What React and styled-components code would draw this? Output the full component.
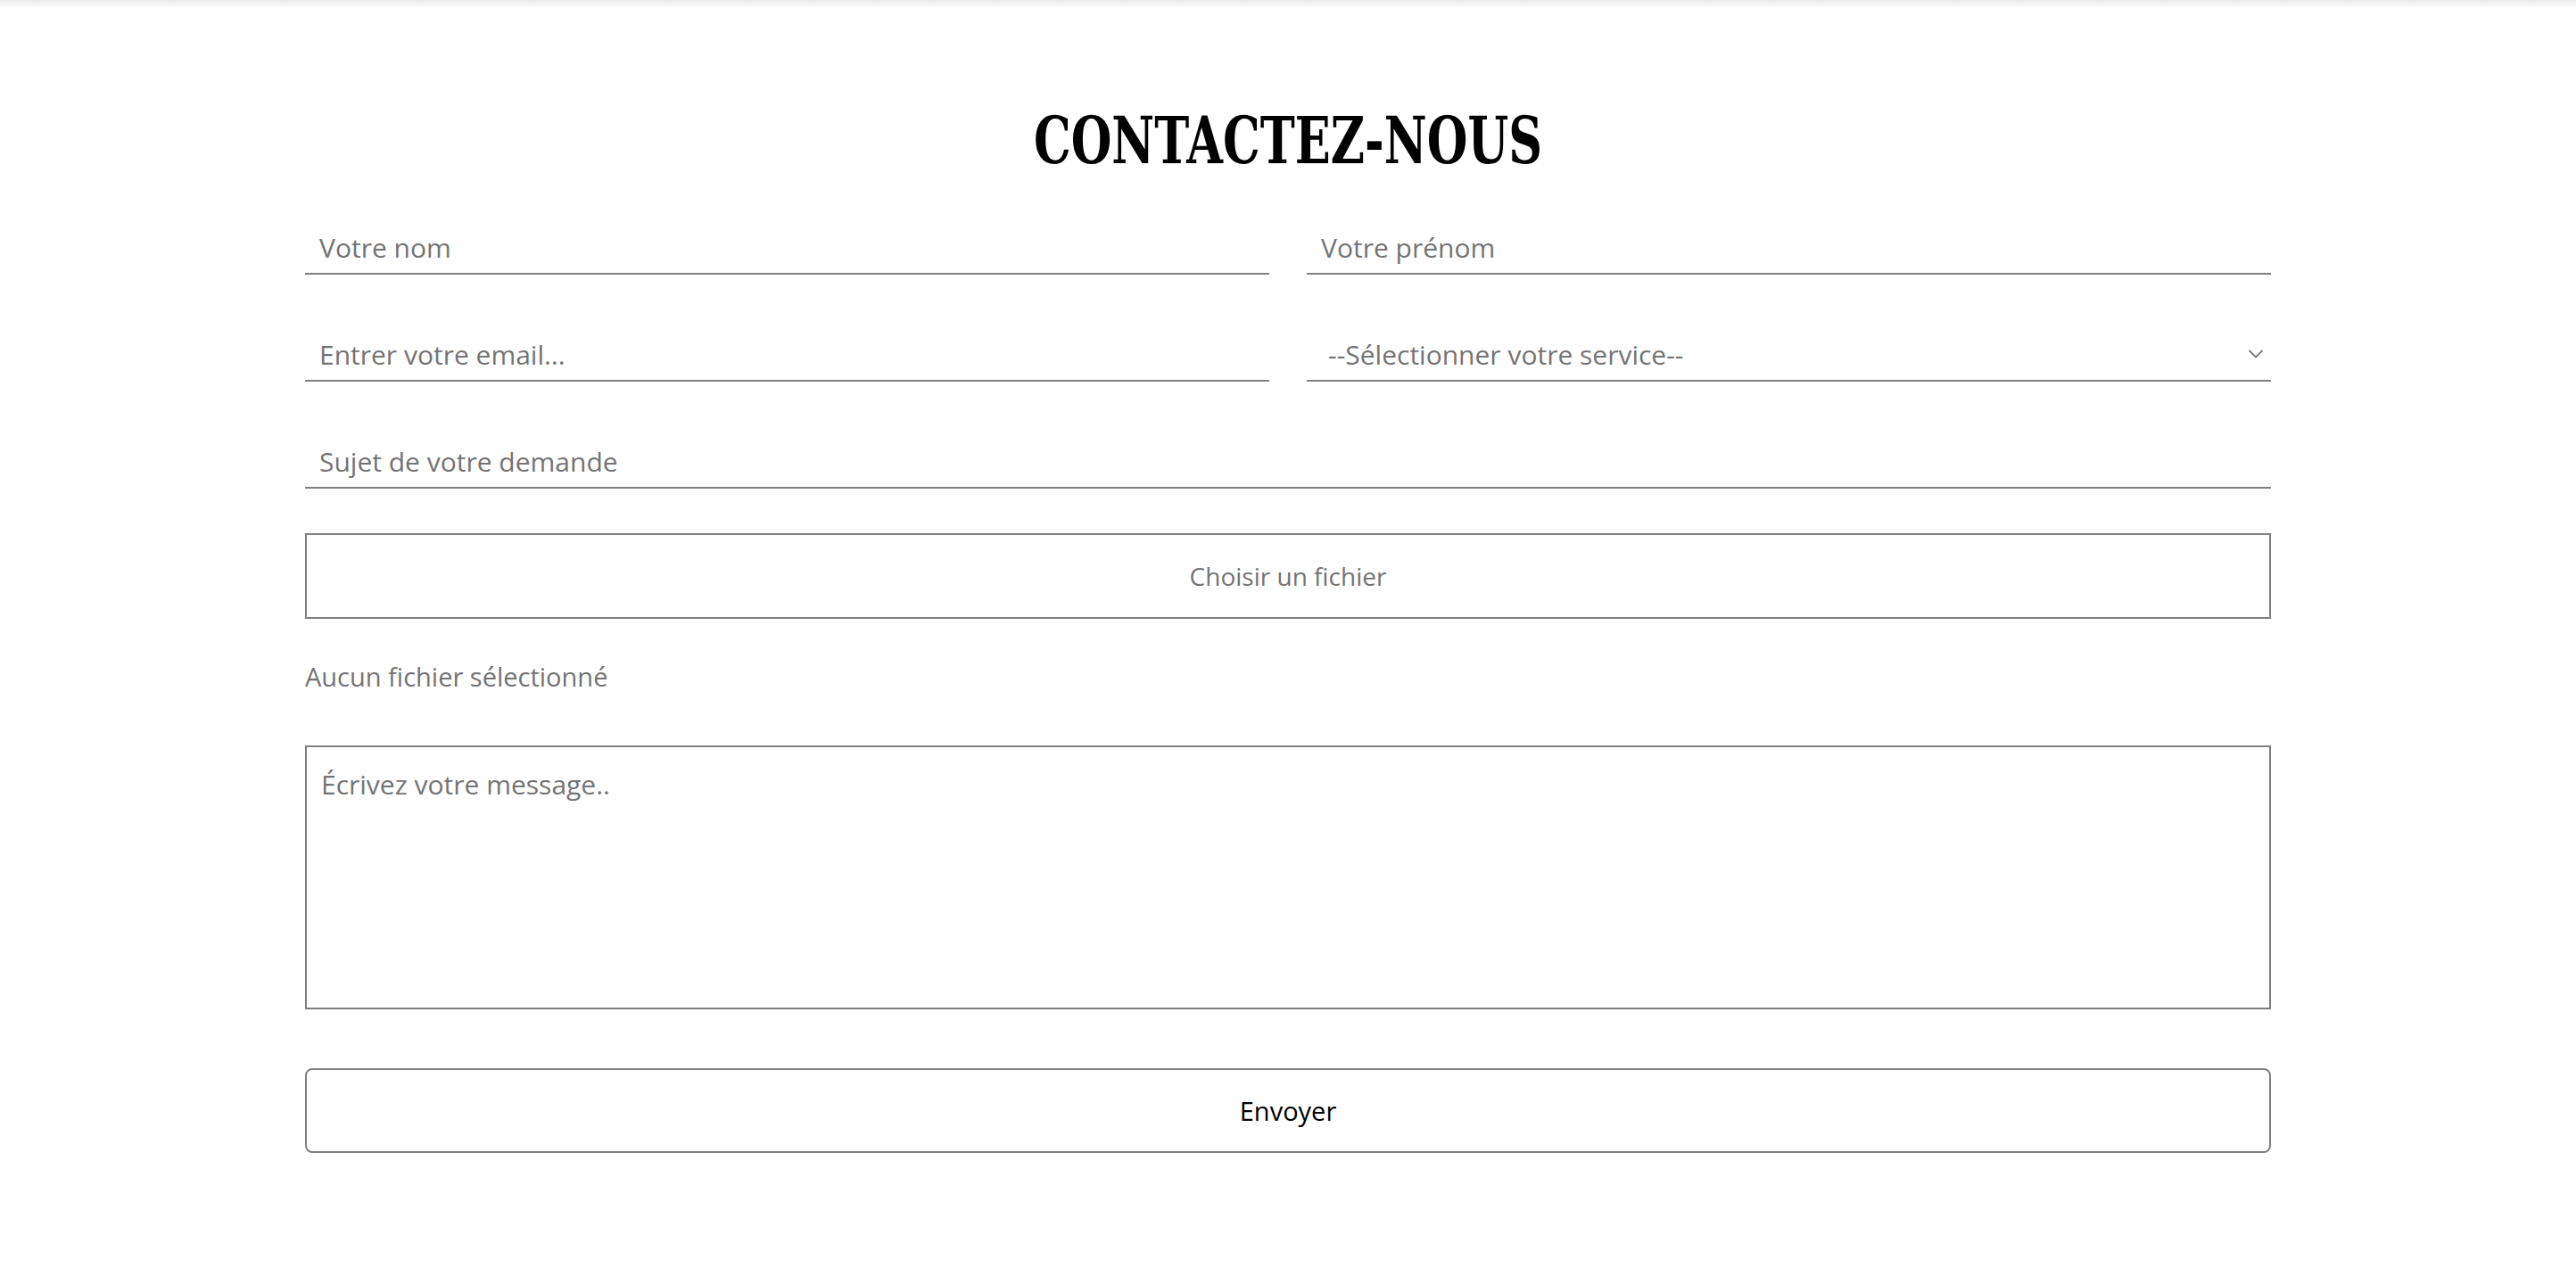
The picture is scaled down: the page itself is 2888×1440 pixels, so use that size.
import React from 'react';
import styled, { createGlobalStyle } from 'styled-components';

const GlobalStyle = createGlobalStyle`
  html, body {
    margin: 0;
    padding: 0;
    background: #ffffff;
  }
  body {
    font-family: 'Open Sans', 'Noto Sans', sans-serif;
  }
`;

const TopShade = styled.div`
  height: 10px;
  background: linear-gradient(to bottom, #ececec, #ffffff);
`;

const StyledContact = styled.section`
  width: 2204px;
  margin: 0 auto;
  padding: 112px 0 120px;
`;

const Title = styled.h1`
  margin: 0 0 54px;
  text-align: center;
  font-family: 'DejaVu Serif Condensed', 'DejaVu Serif', serif;
  font-weight: 700;
  font-size: 72px;
  line-height: 1;
  color: #000;

  span {
    display: inline-block;
    transform: scaleX(0.81);
  }
`;

const Form = styled.form`
  display: flex;
  flex-direction: column;
`;

const Row = styled.div`
  display: grid;
  grid-template-columns: ${props => (props.single ? '1fr' : '1fr 1fr')};
  column-gap: 42px;
  margin-bottom: ${props => props.gap || 60}px;
`;

const Field = styled.input`
  box-sizing: border-box;
  width: 100%;
  height: 60px;
  padding: 0 16px;
  border: none;
  border-bottom: 2px solid #808080;
  background: transparent;
  font-family: 'Open Sans', 'Noto Sans', sans-serif;
  font-size: 30px;
  color: #333;
  outline: none;

  &::placeholder {
    color: #747474;
  }
`;

const SelectWrap = styled.div`
  position: relative;
  height: 60px;
  border-bottom: 2px solid #808080;
  box-sizing: border-box;
`;

const Select = styled.select`
  appearance: none;
  width: 100%;
  height: 100%;
  padding: 0 24px;
  border: none;
  background: transparent;
  font-family: 'Open Sans', 'Noto Sans', sans-serif;
  font-size: 30px;
  color: #747474;
  outline: none;
`;

const Chevron = styled.svg`
  position: absolute;
  right: 8px;
  top: 50%;
  transform: translateY(-50%);
  pointer-events: none;
`;

const FileBox = styled.label`
  box-sizing: border-box;
  display: flex;
  align-items: center;
  justify-content: center;
  height: 96px;
  border: 2px solid #808080;
  font-size: 28px;
  color: #747474;
  cursor: pointer;

  input {
    display: none;
  }
`;

const FileName = styled.p`
  margin: 48px 0 60px;
  font-size: 29px;
  line-height: 34px;
  color: #747474;
`;

const Message = styled.textarea`
  box-sizing: border-box;
  width: 100%;
  height: 296px;
  padding: 22px 16px;
  border: 2px solid #808080;
  resize: none;
  font-family: 'Open Sans', 'Noto Sans', sans-serif;
  font-size: 30px;
  line-height: 40px;
  outline: none;

  &::placeholder {
    color: #747474;
  }
`;

const SendButton = styled.button`
  box-sizing: border-box;
  height: 95px;
  margin-top: 66px;
  border: 2px solid #808080;
  border-radius: 8px;
  background: #fff;
  font-family: 'Open Sans', 'Noto Sans', sans-serif;
  font-size: 29px;
  color: #000;
  cursor: pointer;
`;

const App = () => {
  return (
    <>
      <GlobalStyle />
      <TopShade />
      <StyledContact>
        <Title>
          <span>CONTACTEZ-NOUS</span>
        </Title>
        <Form onSubmit={e => e.preventDefault()}>
          <Row>
            <Field type='text' placeholder='Votre nom' />
            <Field type='text' placeholder='Votre prénom' />
          </Row>
          <Row>
            <Field type='email' placeholder='Entrer votre email...' />
            <SelectWrap>
              <Select defaultValue=''>
                <option value=''>--Sélectionner votre service--</option>
              </Select>
              <Chevron width='18' height='11' viewBox='0 0 18 11'>
                <path d='M1.5 1.5 L9 9 L16.5 1.5' fill='none' stroke='#777' strokeWidth='1.8' />
              </Chevron>
            </SelectWrap>
          </Row>
          <Row single gap={50}>
            <Field type='text' placeholder='Sujet de votre demande' />
          </Row>
          <FileBox>
            Choisir un fichier
            <input type='file' />
          </FileBox>
          <FileName>Aucun fichier sélectionné</FileName>
          <Message placeholder='Écrivez votre message..' />
          <SendButton type='submit'>Envoyer</SendButton>
        </Form>
      </StyledContact>
    </>
  );
};

export default App;
